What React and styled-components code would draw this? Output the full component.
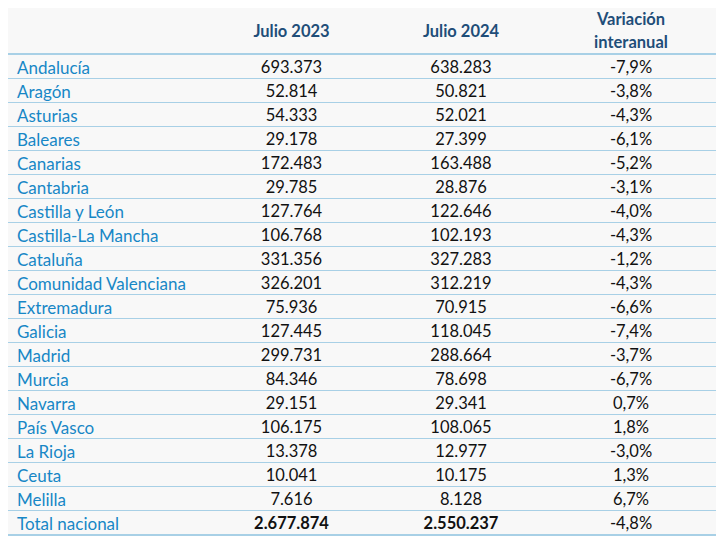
import styled, { createGlobalStyle } from 'styled-components'

const GlobalStyle = createGlobalStyle`
	body {
		margin: 0;
		background: #ffffff;
		font-family: 'Lato', 'Liberation Sans', sans-serif;
	}
`

const rows = [
	['Andalucía', '693.373', '638.283', '-7,9%'],
	['Aragón', '52.814', '50.821', '-3,8%'],
	['Asturias', '54.333', '52.021', '-4,3%'],
	['Baleares', '29.178', '27.399', '-6,1%'],
	['Canarias', '172.483', '163.488', '-5,2%'],
	['Cantabria', '29.785', '28.876', '-3,1%'],
	['Castilla y León', '127.764', '122.646', '-4,0%'],
	['Castilla-La Mancha', '106.768', '102.193', '-4,3%'],
	['Cataluña', '331.356', '327.283', '-1,2%'],
	['Comunidad Valenciana', '326.201', '312.219', '-4,3%'],
	['Extremadura', '75.936', '70.915', '-6,6%'],
	['Galicia', '127.445', '118.045', '-7,4%'],
	['Madrid', '299.731', '288.664', '-3,7%'],
	['Murcia', '84.346', '78.698', '-6,7%'],
	['Navarra', '29.151', '29.341', '0,7%'],
	['País Vasco', '106.175', '108.065', '1,8%'],
	['La Rioja', '13.378', '12.977', '-3,0%'],
	['Ceuta', '10.041', '10.175', '1,3%'],
	['Melilla', '7.616', '8.128', '6,7%'],
]

const App = () => {
	return (
		<Page>
			<GlobalStyle />
			<Table>
				<HeaderRow>
					<HeadCell />
					<HeadCell>Julio 2023</HeadCell>
					<HeadCell>Julio 2024</HeadCell>
					<HeadCell>
						Variación
						<br />
						interanual
					</HeadCell>
				</HeaderRow>
				{rows.map((r) => (
					<Row key={r[0]}>
						<Name>{r[0]}</Name>
						<Num>{r[1]}</Num>
						<Num>{r[2]}</Num>
						<Num>{r[3]}</Num>
					</Row>
				))}
				<Row $last>
					<Name>Total nacional</Name>
					<Num $bold>2.677.874</Num>
					<Num $bold>2.550.237</Num>
					<Num>-4,8%</Num>
				</Row>
			</Table>
		</Page>
	)
}

export default App

const Page = styled.div`
	padding: 8px 0 0 8px;
`

const Table = styled.div`
	width: 708px;
	background: #f8f8f8;
	display: flex;
	flex-direction: column;
`

const grid = `
	display: grid;
	grid-template-columns: 199px 169px 170px 170px;
	align-items: center;
`

const HeaderRow = styled.div`
	${grid}
	height: 45px;
	border-bottom: 2px solid #a8d0e6;
`

const HeadCell = styled.div`
	text-align: center;
	color: #1f4e79;
	font-weight: 700;
	font-size: 16.5px;
	line-height: 23px;
`

const Row = styled.div`
	${grid}
	box-sizing: border-box;
	padding-top: 1px;
	height: ${(p) => (p.$last ? '25px' : '24px')};
	border-bottom: ${(p) => (p.$last ? '2px' : '1px')} solid #a8d0e6;
`

const Name = styled.div`
	padding-left: 9px;
	color: #1787c6;
	font-size: 17px;
	white-space: nowrap;
`

const Num = styled.div`
	text-align: center;
	color: #111111;
	font-size: 16.5px;
	font-weight: ${(p) => (p.$bold ? 700 : 400)};
`
